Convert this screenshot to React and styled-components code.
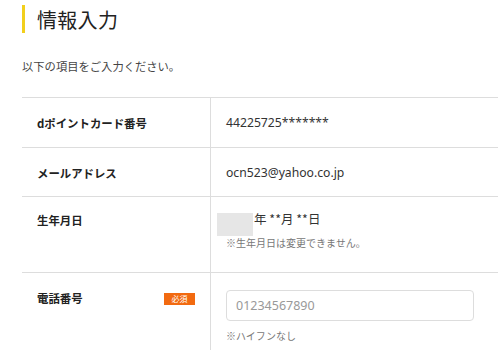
import React from "react";
import styled, { createGlobalStyle } from "styled-components";

const Global = createGlobalStyle`
  html, body { margin: 0; padding: 0; background: #fff; }
  body {
    font-family: "Noto Sans", "Noto Sans CJK JP", sans-serif;
    color: #333;
    overflow: hidden;
  }
`;

const Page = styled.div`
  padding: 5px 0 0 22px;
  width: 476px;
`;

const Heading = styled.h1`
  margin: 0;
  height: 28px;
  border-left: 3px solid #f2cf1c;
  padding-left: 12px;
  display: flex;
  align-items: center;
  font-family: "Noto Sans CJK JP", sans-serif;
  font-weight: 400;
  font-size: 20px;
  color: #222;
  letter-spacing: 0.3px;
`;

const Lead = styled.p`
  margin: 25px 0 0;
  font-family: "Noto Sans CJK JP", sans-serif;
  font-size: 11.3px;
  line-height: 16px;
  color: #444;
`;

const Table = styled.div`
  margin-top: 23px;
  border-top: 1px solid #ddd;
`;

const Row = styled.div`
  display: grid;
  grid-template-columns: 189px 1fr;
  border-bottom: 1px solid #ddd;
  min-height: ${(p) => p.$h || 48}px;
`;

const Label = styled.div`
  border-right: 1px solid #ddd;
  padding: ${(p) => p.$pt || 17}px 15px 0 15px;
  display: flex;
  justify-content: space-between;
  align-items: flex-start;
  font-family: "Noto Sans CJK JP", sans-serif;
  font-weight: 700;
  font-size: 11.4px;
  line-height: 16px;
  color: #222;
`;

const Badge = styled.span`
  display: inline-block;
  width: 31px;
  height: 12px;
  margin-top: 3px;
  background: #f26a10;
  color: #fff;
  font-family: "Noto Sans CJK JP", sans-serif;
  font-weight: 400;
  font-size: 8px;
  line-height: 12px;
  text-align: center;
`;

const Cell = styled.div`
  padding: ${(p) => p.$pt || 17}px 16px 0 15px;
  font-size: 12.2px;
  line-height: 16px;
  color: #333;
`;

const DateLine = styled.div`
  display: flex;
  align-items: flex-start;
  font-family: "Noto Sans CJK JP", sans-serif;
  font-size: 12.5px;
  line-height: 12px;
`;

const Mask = styled.span`
  display: inline-block;
  width: 36px;
  height: 23px;
  margin-left: -9px;
  margin-right: 1px;
  background: #e6e6e6;
`;

const Note = styled.div`
  margin-top: ${(p) => p.$mt || 0}px;
  font-family: "Noto Sans CJK JP", sans-serif;
  font-size: 10px;
  line-height: 14px;
  color: #777;
`;

const Input = styled.input`
  display: block;
  box-sizing: border-box;
  width: 248px;
  height: 31px;
  border: 1px solid #ddd;
  border-radius: 4px;
  padding: 0 9px;
  font-family: "Noto Sans", sans-serif;
  font-size: 12.5px;
  color: #333;
  outline: none;
  &::placeholder { color: #999; }
`;

export default function App() {
  return (
    <>
      <Global />
      <Page>
        <Heading>情報入力</Heading>
        <Lead>以下の項目をご入力ください。</Lead>
        <Table>
          <Row $h={49}>
            <Label>dポイントカード番号</Label>
            <Cell>44225725*******</Cell>
          </Row>
          <Row $h={48}>
            <Label>メールアドレス</Label>
            <Cell>ocn523@yahoo.co.jp</Cell>
          </Row>
          <Row $h={75}>
            <Label $pt={15}>生年月日</Label>
            <Cell $pt={16}>
              <DateLine>
                <Mask />
                <span>年 **月 **日</span>
              </DateLine>
              <Note $mt={0}>※生年月日は変更できません。</Note>
            </Cell>
          </Row>
          <Row $h={90}>
            <Label $pt={17}>
              電話番号
              <Badge>必須</Badge>
            </Label>
            <Cell $pt={17}>
              <Input placeholder="01234567890" />
              <Note $mt={8}>※ハイフンなし</Note>
            </Cell>
          </Row>
        </Table>
      </Page>
    </>
  );
}
